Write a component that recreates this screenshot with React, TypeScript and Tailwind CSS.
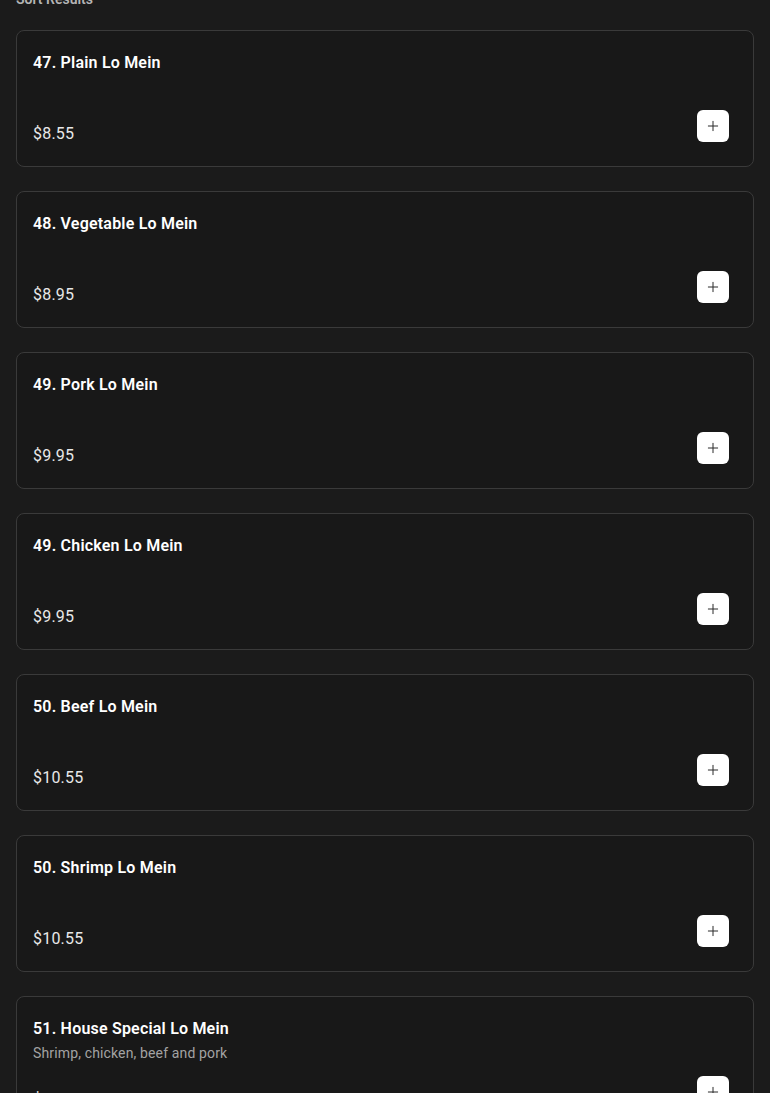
import { Plus } from 'lucide-react'

type Item = {
    name: string
    price: string
    description?: string
}

const items: Item[] = [
    { name: '47. Plain Lo Mein', price: '$8.55' },
    { name: '48. Vegetable Lo Mein', price: '$8.95' },
    { name: '49. Pork Lo Mein', price: '$9.95' },
    { name: '49. Chicken Lo Mein', price: '$9.95' },
    { name: '50. Beef Lo Mein', price: '$10.55' },
    { name: '50. Shrimp Lo Mein', price: '$10.55' },
    {
        name: '51. House Special Lo Mein',
        price: '$11.55',
        description: 'Shrimp, chicken, beef and pork',
    },
]

function MenuCard({ item }: { item: Item }) {
    return (
        <div className="rounded-lg border border-[#3a3a3a] bg-[#181818] pl-4 pr-6 pt-5 pb-6">
            <div className="min-h-[59px]">
                <h3 className="text-base leading-6 font-semibold tracking-[0.2px] text-white">{item.name}</h3>
                {item.description && (
                    <p className="mt-[2px] text-sm leading-5 tracking-[0.14px] text-[#a3a3a3]">{item.description}</p>
                )}
            </div>
            <div className="flex h-8 items-start justify-between">
                <span className="mt-[12px] text-base leading-6 tracking-[0.2px] text-[#e8e8e8]">{item.price}</span>
                <button className="flex h-8 w-8 items-center justify-center rounded-md bg-white text-[#2a2a2a]">
                    <Plus className="h-4 w-4" strokeWidth={1.5} />
                </button>
            </div>
        </div>
    )
}

export default function App() {
    return (
        <div className="min-h-screen overflow-hidden bg-[#1b1b1b] px-4 font-['Roboto',sans-serif]">
            {/* list header, scrolled mostly out of view */}
            <h2 className="-mt-[11px] mb-[21px] text-sm leading-5 font-semibold text-[#b5b5b5]">
                Sort Results
            </h2>
            <div className="flex flex-col gap-6 pb-6">
                {items.map((item) => (
                    <MenuCard key={item.name} item={item} />
                ))}
            </div>
        </div>
    )
}
